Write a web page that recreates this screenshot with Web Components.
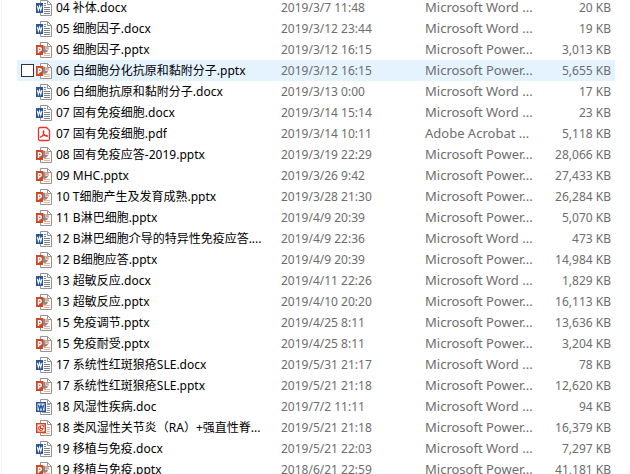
<!DOCTYPE html>
<html lang="zh-CN">
<head>
<meta charset="utf-8">
<title>Files</title>
<style>
    html, body {
        height: 100%;
        margin: 0;
    }

    body {
        overflow: hidden;
        background: #fff;
        font-family: "Noto Sans", "Noto Sans CJK SC", sans-serif;
        font-size: 12px;
    }
</style>
</head>
<body>
<file-list></file-list>

<script>
const PAGE = `
    <path d="M4.5 .5H11.5L15.5 4.5V15.5H4.5Z" fill="#fff" stroke="#949494"/>
    <path d="M11.5 .5V4.5H15.5" fill="none" stroke="#949494"/>`;

const WORD_LINES = '<path d="M8 3.5H10M8 5.5H10M8 7.5H14M8 9.5H14M8 11.5H14M8 13.5H14" stroke="#7f8286"/>';

const WORD_LETTER = '<path d="M1.3 5.8L2.4 10.2L3.6 6.2L4.8 10.2L5.9 5.8" fill="none" stroke="#fff" stroke-width="1.1"/>';

const POWER_BODY = `
    <path d="M7 3.5V10.5A3.5 3.5 0 0 0 12 8H9.5V4Z" fill="#8c8c8c"/>
    <path d="M10 4V7.5H13A3.2 3.2 0 0 0 10 4" fill="#f0a080"/>
    <path d="M8 11.5H14M8 13.5H14" stroke="#f3ad91"/>`;

const ICONS = {
    docx: `${PAGE}${WORD_LINES}
        <path d="M0 3H7V13H0Z" fill="#2a5699"/>${WORD_LETTER}`,
    pptx: `${PAGE}${POWER_BODY}
        <path d="M0 3H7V13H0Z" fill="#d24625"/>
        <path d="M2.5 11V5.7H3.8A1.5 1.5 0 0 1 3.8 8.7H2.5" fill="none" stroke="#fff" stroke-width="1.4"/>`,
    doc: `${PAGE}
        <path d="M11 5.5H14M11 7.5H14M11 9.5H14M11 11.5H14M6 13.5H14" stroke="#8f9aa8"/>
        <path d="M.75 3.75H9.25V12.25H.75Z" fill="#fff" stroke="#2a5699" stroke-width="1.5"/>
        <path d="M2.4 5.8L3.6 10.4L5 6.2L6.4 10.4L7.6 5.8" fill="none" stroke="#2a5699" stroke-width="1.4"/>`,
    ppt: `${PAGE}
        <path d="M11 7.5H14M11 9.5H14M11 11.5H14M6 13.5H14" stroke="#f3ad91"/>
        <path d="M.75 3.75H9.25V12.25H.75Z" fill="#fff" stroke="#d24625" stroke-width="1.5"/>
        <path d="M4.5 6A2.2 2.2 0 1 0 7 8.5H4.5Z" fill="none" stroke="#d24625" stroke-width="1.2"/>
        <path d="M5.5 5.5H7.5V7.5" fill="none" stroke="#d24625"/>`,
    pdf: `
        <path d="M4 1.5H10.5L13.5 4.5V13A1.5 1.5 0 0 1 12 14.5H4A1.5 1.5 0 0 1 2.5 13V3A1.5 1.5 0 0 1 4 1.5Z" fill="#fff" stroke="#e5322d" stroke-width="1.3"/>
        <path d="M4.6 11.2C6.4 10.4 8 7.3 7.8 5.3C7.7 4.4 6.8 5 7.2 6.2C7.8 8.3 9.5 10.3 11 10.4C12.2 10.4 11.4 9.1 9.6 9.2C7.8 9.3 6 9.8 4.8 10.7C4.2 11.2 4.3 11.5 4.6 11.2Z" fill="none" stroke="#e5322d" stroke-width="1.1"/>`
};

class FileIcon extends HTMLElement {
    constructor() {
        super();
        this.attachShadow({ mode: 'open' });
    }

    static get observedAttributes() {
        return ['kind'];
    }

    attributeChangedCallback(name, oldValue, newValue) {
        this.shadowRoot.innerHTML = `
            <style>
                :host {
                    display: block;
                    flex: none;
                    width: 16px;
                    height: 16px;
                }

                svg {
                    display: block;
                }
            </style>
            <svg width="16" height="16" viewBox="0 0 16 16" aria-hidden="true">${ICONS[newValue]}</svg>
        `;
    }
}

window.customElements.define('file-icon', FileIcon);

const nameTemplate = document.createElement('template');
nameTemplate.innerHTML = `
    <style>
        :host {
            display: flex;
            align-items: center;
            gap: 4px;
            height: 21px;
            color: #000;
        }

        span {
            overflow: hidden;
        }
    </style>
    <file-icon></file-icon>
    <span><slot></slot></span>
`;

class FileName extends HTMLElement {
    constructor() {
        super();
        this.attachShadow({ mode: 'open' });
        this.shadowRoot.appendChild(nameTemplate.content.cloneNode(true));
        this.iconEl = this.shadowRoot.querySelector('file-icon');
    }

    connectedCallback() {
        this.iconEl.setAttribute('kind', this.getAttribute('kind'));
    }
}

window.customElements.define('file-name', FileName);

const WORD = 'Microsoft Word ...';
const POWER = 'Microsoft Power...';
const ACROBAT = 'Adobe Acrobat ...';

// kind, name, modified, type, size
const FILES = [
    ['docx', '04 补体.docx', '2019/3/7 11:48', WORD, '20 KB'],
    ['docx', '05 细胞因子.docx', '2019/3/12 23:44', WORD, '19 KB'],
    ['pptx', '05 细胞因子.pptx', '2019/3/12 16:15', POWER, '3,013 KB'],
    ['pptx', '06 白细胞分化抗原和黏附分子.pptx', '2019/3/12 16:15', POWER, '5,655 KB', true],
    ['docx', '06 白细胞抗原和黏附分子.docx', '2019/3/13 0:00', WORD, '17 KB'],
    ['docx', '07 固有免疫细胞.docx', '2019/3/14 15:14', WORD, '23 KB'],
    ['pdf', '07 固有免疫细胞.pdf', '2019/3/14 10:11', ACROBAT, '5,118 KB'],
    ['pptx', '08 固有免疫应答-2019.pptx', '2019/3/19 22:29', POWER, '28,066 KB'],
    ['pptx', '09 MHC.pptx', '2019/3/26 9:42', POWER, '27,433 KB'],
    ['pptx', '10 T细胞产生及发育成熟.pptx', '2019/3/28 21:30', POWER, '26,284 KB'],
    ['pptx', '11 B淋巴细胞.pptx', '2019/4/9 20:39', POWER, '5,070 KB'],
    ['docx', '12 B淋巴细胞介导的特异性免疫应答....', '2019/4/9 22:36', WORD, '473 KB'],
    ['pptx', '12 B细胞应答.pptx', '2019/4/9 20:39', POWER, '14,984 KB'],
    ['docx', '13 超敏反应.docx', '2019/4/11 22:26', WORD, '1,829 KB'],
    ['pptx', '13 超敏反应.pptx', '2019/4/10 20:20', POWER, '16,113 KB'],
    ['pptx', '15 免疫调节.pptx', '2019/4/25 8:11', POWER, '13,636 KB'],
    ['pptx', '15 免疫耐受.pptx', '2019/4/25 8:11', POWER, '3,204 KB'],
    ['docx', '17 系统性红斑狼疮SLE.docx', '2019/5/31 21:17', WORD, '78 KB'],
    ['pptx', '17 系统性红斑狼疮SLE.pptx', '2019/5/21 21:18', POWER, '12,620 KB'],
    ['doc', '18 风湿性疾病.doc', '2019/7/2 11:11', WORD, '94 KB'],
    ['ppt', '18 类风湿性关节炎（RA）+强直性脊...', '2019/5/21 21:18', POWER, '16,379 KB'],
    ['docx', '19 移植与免疫.docx', '2019/5/21 22:03', WORD, '7,297 KB'],
    ['pptx', '19 移植与免疫.pptx', '2018/6/21 22:59', POWER, '41,181 KB']
];

const listTemplate = document.createElement('template');
listTemplate.innerHTML = `
    <style>
        :host {
            display: block;
            box-sizing: border-box;
            min-height: 100%;
            margin-left: 1px;
            padding: 0 15px;
            border-left: 1px solid #f5f5f5;
        }

        /* scrolled a little way into the first row */
        table {
            width: 100%;
            margin-top: -3px;
            table-layout: fixed;
            border-collapse: collapse;
        }

        .check { width: 19px; }
        .modified { width: 144px; }
        .type { width: 110px; }
        .size { width: 80px; }

        td {
            height: 21px;
            padding: 0;
            line-height: 21px;
            white-space: nowrap;
            color: #6d6d6d;
        }

        td:nth-child(4) {
            font-size: 13px;
        }

        td:last-child {
            padding-right: 4px;
            text-align: right;
        }

        tr.hover {
            background: #e5f3ff;
        }

        input {
            display: block;
            appearance: none;
            box-sizing: border-box;
            width: 13px;
            height: 13px;
            margin: 0 0 0 4px;
            border: 1px solid #333;
            background: #fff;
        }
    </style>
    <table>
        <colgroup>
            <col class="check">
            <col>
            <col class="modified">
            <col class="type">
            <col class="size">
        </colgroup>
        <tbody></tbody>
    </table>
`;

class FileList extends HTMLElement {
    constructor() {
        super();
        this.attachShadow({ mode: 'open' });
        this.shadowRoot.appendChild(listTemplate.content.cloneNode(true));
        this.bodyEl = this.shadowRoot.querySelector('tbody');
    }

    connectedCallback() {
        this.render();
    }

    render() {
        this.bodyEl.innerHTML = FILES.map(([kind, name, modified, type, size, hover]) => `
            <tr class="${hover ? 'hover' : ''}">
                <td>${hover ? `<input type="checkbox" aria-label="${name}">` : ''}</td>
                <td><file-name kind="${kind}">${name}</file-name></td>
                <td>${modified}</td>
                <td>${type}</td>
                <td>${size}</td>
            </tr>
        `).join('');
    }
}

window.customElements.define('file-list', FileList);
</script>
</body>
</html>
